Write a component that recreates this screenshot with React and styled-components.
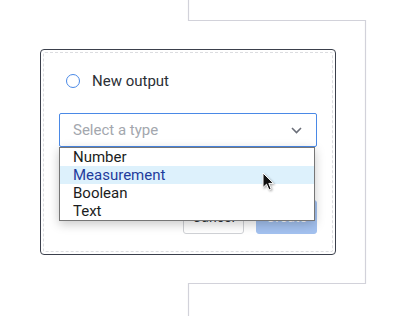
import React from 'react';
import styled, { createGlobalStyle } from 'styled-components';

const GlobalStyle = createGlobalStyle`
  html, body {
    margin: 0;
    padding: 0;
    background: #ffffff;
  }
  body {
    font-family: Roboto, "Liberation Sans", sans-serif;
    color: #2b2f36;
  }
`;

const Page = styled.div`
  position: relative;
  width: 400px;
  height: 316px;
  padding: 49px 0 0 40px;
  box-sizing: border-box;
  overflow: hidden;
`;

const Connector = styled.svg`
  position: absolute;
  left: 0;
  top: 0;
  pointer-events: none;
`;

const Card = styled.div`
  position: relative;
  width: 296px;
  height: 206px;
  box-sizing: border-box;
  border: 1px solid #3b404c;
  border-radius: 4px;
  padding: 2px;
  background: #ffffff;
`;

const Inner = styled.div`
  height: 100%;
  box-sizing: border-box;
  border: 1px dashed #dcdde0;
  border-radius: 2px;
  padding: 18px 15px 17px;
  display: flex;
  flex-direction: column;
`;

const RadioRow = styled.label`
  display: flex;
  align-items: center;
  gap: 12px;
  height: 19px;
  padding-left: 7px;
  font-size: 15px;
  color: #2b2f36;
`;

const RadioCircle = styled.span`
  width: 14px;
  height: 14px;
  border-radius: 50%;
  border: 1.5px solid #4a89e6;
  box-sizing: border-box;
`;

const SelectWrap = styled.div`
  position: relative;
  margin-top: 23px;
`;

const SelectBox = styled.div`
  height: 34px;
  box-sizing: border-box;
  border: 1px solid #4a89e6;
  border-radius: 2px;
  display: flex;
  align-items: center;
  justify-content: space-between;
  padding: 0 14px 0 13px;
  font-size: 15px;
  color: #a3a7ae;
`;

const Chevron = styled.svg`
  display: block;
`;

const Listbox = styled.ul`
  position: absolute;
  top: 100%;
  left: 0;
  width: 256px;
  margin: 0;
  padding: 0;
  list-style: none;
  box-sizing: border-box;
  border: 1px solid #767676;
  background: #ffffff;
  box-shadow: 0 3px 10px rgba(0, 0, 0, 0.22);
  z-index: 2;
`;

const Option = styled.li`
  height: 18px;
  line-height: 18px;
  padding-left: 13px;
  font-size: 15px;
  color: ${p => (p.$active ? '#1f3c9c' : '#1b1d21')};
  background: ${p => (p.$active ? '#ddf1fc' : 'transparent')};
`;

const Actions = styled.div`
  margin-top: 53px;
  display: flex;
  justify-content: flex-end;
  gap: 12px;
`;

const Button = styled.button`
  width: 61px;
  height: 34px;
  box-sizing: border-box;
  border-radius: 3px;
  font-family: inherit;
  font-size: 14px;
  border: 1px solid ${p => (p.$primary ? '#a3c1ef' : '#cfd1d5')};
  background: ${p => (p.$primary ? '#a3c1ef' : '#ffffff')};
  color: ${p => (p.$primary ? '#ffffff' : '#2b2f36')};
`;

const Cursor = styled.svg`
  position: absolute;
  left: 262px;
  top: 172px;
  z-index: 3;
  filter: drop-shadow(1px 1px 1px rgba(0, 0, 0, 0.35));
`;

const options = ['Number', 'Measurement', 'Boolean', 'Text'];

export default function App() {
  return (
    <>
      <GlobalStyle />
      <Page>
        <Connector width="400" height="316" viewBox="0 0 400 316">
          <path
            d="M188.5 0 V20.5 H365.5 V283.5 H188.5 V316"
            fill="none"
            stroke="#d2d2da"
            strokeWidth="1.2"
          />
        </Connector>
        <Card>
          <Inner>
            <RadioRow>
              <RadioCircle />
              New output
            </RadioRow>
            <SelectWrap>
              <SelectBox>
                Select a type
                <Chevron width="11" height="7" viewBox="0 0 11 7">
                  <path d="M1 1 L5.5 5.5 L10 1" fill="none" stroke="#6a6e78" strokeWidth="1.6" />
                </Chevron>
              </SelectBox>
              <Listbox>
                {options.map(o => (
                  <Option key={o} $active={o === 'Measurement'}>{o}</Option>
                ))}
              </Listbox>
            </SelectWrap>
            <Actions>
              <Button>Cancel</Button>
              <Button $primary>Create</Button>
            </Actions>
          </Inner>
        </Card>
        <Cursor width="13" height="20" viewBox="0 0 13 20">
          <path
            d="M1 1 L1 15.5 L4.5 12.2 L7 18 L9.2 17 L6.8 11.4 L11.5 11.4 Z"
            fill="#111"
            stroke="#fff"
            strokeWidth="1"
          />
        </Cursor>
      </Page>
    </>
  );
}
